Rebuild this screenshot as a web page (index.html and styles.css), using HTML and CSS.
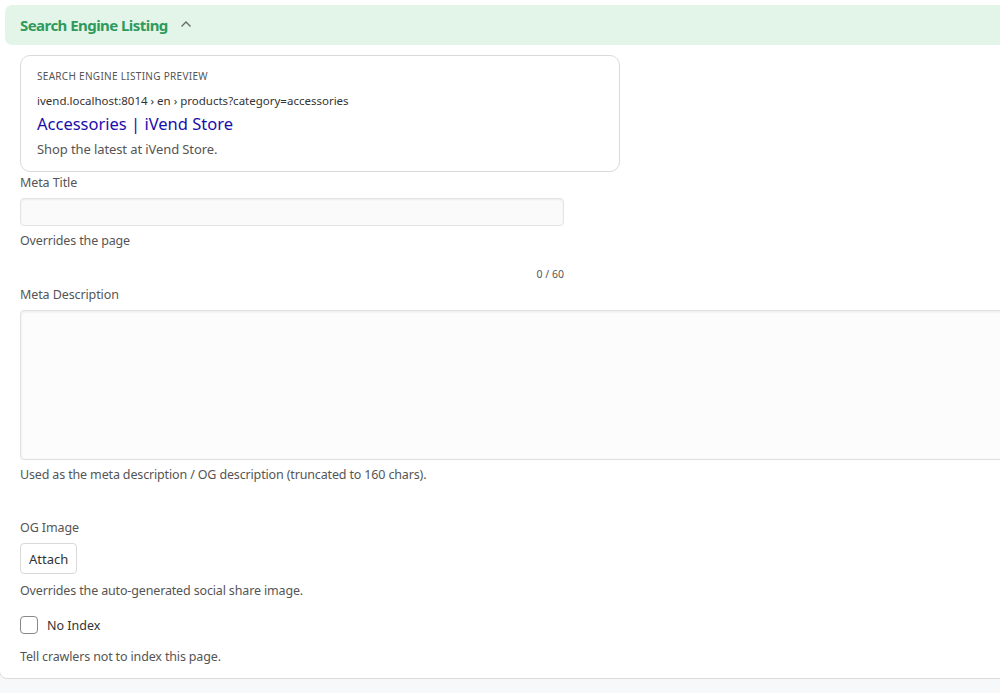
FILE: index.html
```html
<!DOCTYPE html>
<html>
<head>
<meta charset="utf-8">
<link rel="stylesheet" href="styles.css">
</head>
<body>
<div class="card">
  <div class="section-head">
    <span class="section-title">Search Engine Listing</span>
    <svg class="chev" width="12" height="8" viewBox="0 0 12 8"><path d="M1.5 6.5 L6 2 L10.5 6.5" fill="none" stroke="#666" stroke-width="1.3"/></svg>
  </div>
  <div class="body">
    <div class="preview">
      <div class="preview-label">SEARCH ENGINE LISTING PREVIEW</div>
      <div class="preview-url">ivend.localhost:8014 › en › products?category=accessories</div>
      <div class="preview-title">Accessories | iVend Store</div>
      <div class="preview-desc">Shop the latest at iVend Store.</div>
    </div>
    <div class="field">
      <label class="label">Meta Title</label>
      <input class="input" type="text">
      <div class="help">Overrides the page</div>
      <div class="count">0 / 60</div>
    </div>
    <div class="field">
      <label class="label">Meta Description</label>
      <textarea class="textarea"></textarea>
      <div class="help">Used as the meta description / OG description (truncated to 160 chars).</div>
    </div>
    <div class="field og">
      <label class="label">OG Image</label>
      <button class="btn">Attach</button>
      <div class="help">Overrides the auto-generated social share image.</div>
    </div>
    <div class="check-row">
      <span class="checkbox"></span>
      <span class="check-label">No Index</span>
    </div>
    <div class="help last">Tell crawlers not to index this page.</div>
  </div>
</div>
</body>
</html>
```
FILE: styles.css
```css
html, body {
  margin: 0;
  padding: 0;
  background: #f7f8fa;
  font-family: "Noto Sans", "Open Sans", sans-serif;
  color: #333;
  overflow: hidden;
}
.card {
  background: #fff;
  border: 1px solid #dcdcdc;
  border-radius: 0 0 8px 8px;
  margin: -10px -20px 0 -1px;
  padding-top: 14px;
  height: 689px;
  box-sizing: border-box;
}
.section-head {
  margin-left: 5px;
  height: 40px;
  background: #e3f5e9;
  border-radius: 7px 0 0 7px;
  display: flex;
  align-items: center;
  padding-left: 15px;
}
.section-title {
  color: #2e9a5c;
  font-weight: 700;
  font-size: 15px;
  letter-spacing: -0.55px;
}
.chev {
  margin-left: 12px;
  margin-top: -2px;
}
.body {
  padding: 10px 0 0 20px;
}
.preview {
  width: 600px;
  box-sizing: border-box;
  height: 117px;
  border: 1px solid #dadada;
  border-radius: 10px;
  padding: 13px 16px 0 16px;
}
.preview-label {
  font-size: 10px;
  color: #555;
  letter-spacing: 0.3px;
  line-height: 14px;
}
.preview-url {
  font-size: 11.5px;
  color: #333;
  margin-top: 11px;
  line-height: 14px;
}
.preview-title {
  font-size: 16.5px;
  color: #1a0dab;
  margin-top: 5px;
  line-height: 22px;
}
.preview-desc {
  font-size: 13px;
  color: #555;
  margin-top: 5px;
  line-height: 18px;
  letter-spacing: -0.1px;
}
.field {
  display: flex;
  flex-direction: column;
  align-items: flex-start;
}
.label {
  font-size: 12.5px;
  color: #555;
  line-height: 18px;
  margin-top: 2px;
  letter-spacing: -0.1px;
}
.input {
  margin-top: 6px;
  width: 544px;
  height: 28px;
  box-sizing: border-box;
  background: #fafafa;
  border: 1px solid #e4e4e4;
  border-radius: 4px;
  box-shadow: inset 0 1px 2px rgba(0,0,0,0.06);
  outline: none;
}
.help {
  font-size: 12.5px;
  color: #555;
  line-height: 18px;
  margin-top: 6px;
  letter-spacing: -0.15px;
}
.count {
  width: 544px;
  text-align: right;
  font-size: 10.5px;
  color: #555;
  margin-top: 17px;
  margin-bottom: 3px;
  line-height: 14px;
}
.textarea {
  margin-top: 6px;
  width: calc(100% + 10px);
  height: 150px;
  box-sizing: border-box;
  background: #fcfcfc;
  border: 1px solid #e0e0e0;
  border-radius: 4px 0 0 4px;
  box-shadow: inset 0 1px 3px rgba(0,0,0,0.08);
  resize: none;
  outline: none;
}
.og {
  margin-top: 33px;
}
.btn {
  margin-top: 6px;
  height: 31px;
  padding: 0 8px;
  background: #fff;
  border: 1px solid #d9d9d9;
  border-radius: 4px;
  font-family: inherit;
  font-size: 13px;
  color: #333;
  margin-bottom: 2px;
}
.check-row {
  display: flex;
  align-items: center;
  margin-top: 16px;
}
.checkbox {
  width: 16px;
  height: 16px;
  border: 1px solid #888;
  border-radius: 4px;
}
.check-label {
  margin-left: 9px;
  font-size: 12.5px;
  color: #333;
}
.last {
  margin-top: 14px;
}
```
